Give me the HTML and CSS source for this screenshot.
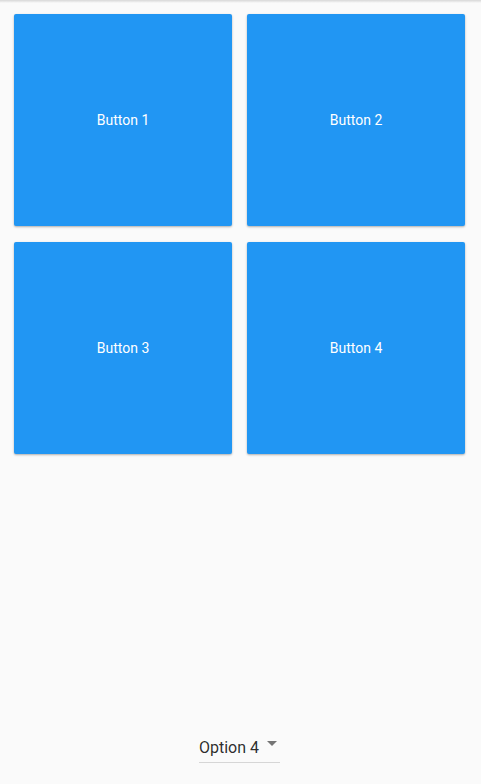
FILE: index.html
```html
<!DOCTYPE html>
<html>
<head>
<meta charset="utf-8">
<link rel="stylesheet" href="styles.css">
</head>
<body>
<div class="page">
  <div class="grid">
    <button class="tile">Button 1</button>
    <button class="tile">Button 2</button>
    <button class="tile">Button 3</button>
    <button class="tile">Button 4</button>
  </div>
  <div class="footer">
    <div class="dropdown">
      <span class="dropdown-label">Option 4</span>
      <svg class="dropdown-icon" width="24" height="24" viewBox="0 0 24 24"><path d="M8 10l5 5 5-5z" fill="#757575"/></svg>
    </div>
  </div>
</div>
</body>
</html>
```
FILE: styles.css
```css
html, body {
  margin: 0;
  padding: 0;
}
body {
  background: linear-gradient(rgba(0,0,0,0.14), rgba(0,0,0,0) 3px) no-repeat, #fafafa;
  font-family: Roboto, "Noto Sans", sans-serif;
  width: 481px;
  height: 784px;
  overflow: hidden;
}
.page {
  display: flex;
  flex-direction: column;
  height: 784px;
}
.grid {
  display: grid;
  grid-template-columns: 218px 218px;
  grid-template-rows: 212px 212px;
  column-gap: 15px;
  row-gap: 16px;
  padding: 14px 0 0 14px;
}
.tile {
  border: none;
  margin: 0;
  padding: 0;
  background: #2196f3;
  color: #ffffff;
  border-radius: 2px;
  box-shadow: 0 1px 2px rgba(0,0,0,0.22), 0 1px 3px rgba(0,0,0,0.1);
  font-family: Roboto, sans-serif;
  font-size: 14px;
  font-weight: 400;
  display: flex;
  align-items: center;
  justify-content: center;
}
.footer {
  margin-top: auto;
  display: flex;
  justify-content: center;
  padding-bottom: 21px;
}
.dropdown {
  display: flex;
  align-items: flex-start;
  justify-content: space-between;
  width: 81px;
  padding-bottom: 2px;
  border-bottom: 1px solid #d6d6d6;
  margin-right: 2px;
}
.dropdown-label {
  margin-top: 5px;
  font-size: 16px;
  line-height: 24px;
  color: rgba(0,0,0,0.84);
  white-space: nowrap;
}
.dropdown-icon {
  display: block;
  flex: none;
}
```
